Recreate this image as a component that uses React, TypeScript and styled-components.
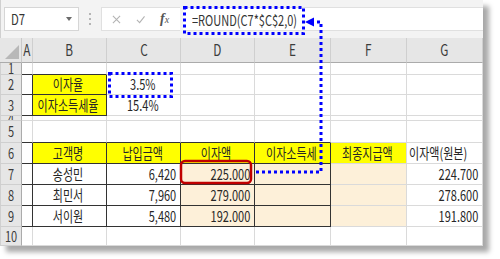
import React from "react";
import styled, { createGlobalStyle, css } from "styled-components";

const GlobalStyle = createGlobalStyle`
  html, body {
    margin: 0;
    padding: 0;
    background: #ffffff;
  }
  body {
    font-family: "Noto Sans CJK KR", "Noto Sans", sans-serif;
    color: #333;
  }
`;

type Fill = "yellow" | "peach";
type Align = "left" | "center" | "right";

interface CellData {
  text?: string;
  align?: Align;
  fill?: Fill;
}

interface RowData {
  num: string;
  height: number;
  cells: Record<string, CellData>;
}

const COLS = ["A", "B", "C", "D", "E", "F", "G"];
const COL_WIDTHS = [22, 11, 74, 74, 74, 76, 76, 76];

const rows: RowData[] = [
  { num: "1", height: 12, cells: {} },
  {
    num: "2",
    height: 20,
    cells: {
      B: { text: "이자율", align: "center", fill: "yellow" },
      C: { text: "3.5%", align: "center" },
    },
  },
  {
    num: "3",
    height: 21,
    cells: {
      B: { text: "이자소득세율", align: "center", fill: "yellow" },
      C: { text: "15.4%", align: "center" },
    },
  },
  { num: "4", height: 5, cells: {} },
  { num: "5", height: 22, cells: {} },
  {
    num: "6",
    height: 21,
    cells: {
      B: { text: "고객명", align: "center", fill: "yellow" },
      C: { text: "납입금액", align: "center", fill: "yellow" },
      D: { text: "이자액", align: "center", fill: "yellow" },
      E: { text: "이자소득세", align: "center", fill: "yellow" },
      F: { text: "최종지급액", align: "center", fill: "yellow" },
      G: { text: "이자액(원본)", align: "left" },
    },
  },
  {
    num: "7",
    height: 21,
    cells: {
      B: { text: "송성민", align: "center" },
      C: { text: "6,420", align: "right" },
      D: { text: "225.000", align: "right", fill: "peach" },
      E: { fill: "peach" },
      F: { fill: "peach" },
      G: { text: "224.700", align: "right" },
    },
  },
  {
    num: "8",
    height: 21,
    cells: {
      B: { text: "최민서", align: "center" },
      C: { text: "7,960", align: "right" },
      D: { text: "279.000", align: "right", fill: "peach" },
      E: { fill: "peach" },
      F: { fill: "peach" },
      G: { text: "278.600", align: "right" },
    },
  },
  {
    num: "9",
    height: 21,
    cells: {
      B: { text: "서이원", align: "center" },
      C: { text: "5,480", align: "right" },
      D: { text: "192.000", align: "right", fill: "peach" },
      E: { fill: "peach" },
      F: { fill: "peach" },
      G: { text: "191.800", align: "right" },
    },
  },
  { num: "10", height: 19, cells: {} },
];

// bordered tables: [firstRow, lastRow, firstCol, lastCol] as indexes
const tables = [
  [1, 2, 1, 2],
  [5, 8, 1, 5],
];

const inTable = (r: number, c: number) =>
  tables.some(([r0, r1, c0, c1]) => r >= r0 && r <= r1 && c >= c0 && c <= c1);

const fills: Record<Fill, string> = {
  yellow: "#ffff00",
  peach: "#fdf0d9",
};

export default function App() {
  return (
    <>
      <GlobalStyle />
      <Page>
        <Window>
          <Toolbar>
            <NameBox>
              <NameText>D7</NameText>
              <DropArrow />
            </NameBox>
            <Grip>
              <i />
              <i />
              <i />
            </Grip>
            <ButtonBox>
              <ToolIcon viewBox="0 0 10 10">
                <path d="M1 1 L9 9 M9 1 L1 9" stroke="#b3b3b3" strokeWidth="1.2" fill="none" />
              </ToolIcon>
              <ToolIcon viewBox="0 0 10 10">
                <path d="M1 5.5 L4 8.5 L9.5 1.5" stroke="#b3b3b3" strokeWidth="1.2" fill="none" />
              </ToolIcon>
              <Fx>
                <em>f</em>
                <span>x</span>
              </Fx>
            </ButtonBox>
            <FormulaInput>
              <Txt $align="left">=ROUND(C7*$C$2,0)</Txt>
            </FormulaInput>
          </Toolbar>

          <Sheet>
            <Corner />
            {COLS.map((c) => (
              <ColHead key={c}>
                <Txt $align="center">{c}</Txt>
              </ColHead>
            ))}
            {rows.map((row, r) => (
              <React.Fragment key={row.num}>
                <RowHead $h={row.height}>
                  <Txt $align="center">{row.num}</Txt>
                </RowHead>
                {COLS.map((c, ci) => {
                  const cell = row.cells[c] || {};
                  const col = ci + 1;
                  const own = inTable(r, col);
                  return (
                    <Cell
                      key={c}
                      $h={row.height}
                      $fill={cell.fill}
                      $align={cell.align || "left"}
                      $darkRight={own || inTable(r, col + 1)}
                      $darkBottom={own || inTable(r + 1, col)}
                    >
                      {cell.text && <Txt $align={cell.align || "left"}>{cell.text}</Txt>}
                    </Cell>
                  );
                })}
              </React.Fragment>
            ))}
          </Sheet>

          <Marks viewBox="0 0 483 246">
            <rect x="184.5" y="7.5" width="119" height="26" fill="none" stroke="#0000ff" strokeWidth="3" strokeDasharray="3 3" />
            <rect x="109.5" y="73.5" width="62" height="23" fill="none" stroke="#0000ff" strokeWidth="3" strokeDasharray="3 3" />
            <rect x="181" y="161" width="70" height="22" rx="4" fill="none" stroke="#c00000" strokeWidth="2.5" />
            <polyline points="256,172 321,172 321,22 314,22" fill="none" stroke="#0000ff" strokeWidth="3" strokeDasharray="3 3" />
            <polygon points="305,22 314,17.5 314,26.5" fill="#0000ff" />
          </Marks>
        </Window>
      </Page>
    </>
  );
}

const Page = styled.div`
  width: 500px;
  height: 259px;
  background: #ffffff;
  overflow: hidden;
`;

const Window = styled.div`
  position: relative;
  width: 483px;
  height: 246px;
  background: #ffffff;
  box-shadow: 6px 6px 5px rgba(0, 0, 0, 0.34);
`;

const Txt = styled.span<{ $align: Align }>`
  display: inline-block;
  white-space: nowrap;
  transform: scaleX(0.76);
  transform-origin: ${({ $align }) => $align};
`;

const Toolbar = styled.div`
  height: 38px;
  box-sizing: border-box;
  display: flex;
  align-items: center;
  padding: 0 0 0 3px;
  background: #f3f3f3;
  border-left: 1px solid #d0d0d0;
  font-size: 14.5px;
  color: #333;
`;

const NameBox = styled.div`
  width: 75px;
  height: 24px;
  box-sizing: border-box;
  display: flex;
  align-items: center;
  justify-content: space-between;
  padding: 0 6px 0 6px;
  background: #ffffff;
  border: 1px solid #d6d6d6;
`;

const NameText = styled.span`
  transform: scaleX(0.78);
  transform-origin: left;
  line-height: 1;
`;

const DropArrow = styled.span`
  width: 0;
  height: 0;
  border-left: 3px solid transparent;
  border-right: 3px solid transparent;
  border-top: 4px solid #6b6b6b;
`;

const Grip = styled.div`
  width: 22px;
  display: flex;
  flex-direction: column;
  align-items: center;
  gap: 3px;

  & i {
    width: 2px;
    height: 2px;
    background: #b5b5b5;
  }
`;

const ButtonBox = styled.div`
  width: 79px;
  height: 24px;
  box-sizing: border-box;
  display: flex;
  align-items: center;
  gap: 15px;
  padding-left: 10px;
  background: #ffffff;
  border: 1px solid #e0e0e0;
  border-right: none;
`;

const ToolIcon = styled.svg`
  width: 9px;
  height: 9px;
`;

const Fx = styled.span`
  font-family: "Liberation Serif", "DejaVu Serif", serif;
  font-style: italic;
  color: #555;
  font-size: 14px;
  line-height: 1;

  & em {
    font-weight: bold;
  }
  & span {
    font-size: 10px;
  }
`;

const FormulaInput = styled.div`
  flex: 1;
  height: 24px;
  box-sizing: border-box;
  display: flex;
  align-items: center;
  margin-left: 3px;
  padding-left: 9px;
  background: #ffffff;
  border-top: 1px solid #e0e0e0;
  border-bottom: 1px solid #e0e0e0;
`;

const Sheet = styled.div`
  display: grid;
  grid-template-columns: ${COL_WIDTHS.map((w) => `${w}px`).join(" ")};
  grid-template-rows: 25px ${rows.map((r) => `${r.height}px`).join(" ")};
  font-size: 14.5px;
`;

const headBase = css`
  box-sizing: border-box;
  display: flex;
  align-items: center;
  justify-content: center;
  overflow: hidden;
  background: #e6e6e6;
  color: #3c3c3c;
  line-height: 1;
`;

const Corner = styled.div`
  ${headBase}
  position: relative;
  border-right: 1px solid #c9c9c9;
  border-bottom: 1px solid #ababab;

  &::after {
    content: "";
    position: absolute;
    right: 2px;
    bottom: 3px;
    width: 14px;
    height: 14px;
    background: #b8b8b8;
    clip-path: polygon(100% 0, 100% 100%, 0 100%);
  }
`;

const ColHead = styled.div`
  ${headBase}
  border-right: 1px solid #cfcfcf;
  border-bottom: 1px solid #ababab;
  font-size: 15.5px;
`;

const RowHead = styled.div<{ $h: number }>`
  ${headBase}
  border-right: 1px solid #ababab;
  border-bottom: 1px solid #cfcfcf;
  border-left: 1px solid #d0d0d0;
  height: ${({ $h }) => $h}px;
`;

const Cell = styled.div<{
  $h: number;
  $fill?: Fill;
  $align: Align;
  $darkRight: boolean;
  $darkBottom: boolean;
}>`
  box-sizing: border-box;
  height: ${({ $h }) => $h}px;
  display: flex;
  align-items: center;
  justify-content: ${({ $align }) =>
    $align === "right" ? "flex-end" : $align === "center" ? "center" : "flex-start"};
  padding: 0 4px 0 2px;
  overflow: ${({ $align }) => ($align === "left" ? "visible" : "hidden")};
  background: ${({ $fill }) => ($fill ? fills[$fill] : "#ffffff")};
  color: #262626;
  line-height: 1;
  border-right: 1px solid ${({ $darkRight }) => ($darkRight ? "#333" : "#dadada")};
  border-bottom: 1px solid ${({ $darkBottom }) => ($darkBottom ? "#333" : "#dadada")};
`;

const Marks = styled.svg`
  position: absolute;
  left: 0;
  top: 0;
  width: 483px;
  height: 246px;
  pointer-events: none;
`;
